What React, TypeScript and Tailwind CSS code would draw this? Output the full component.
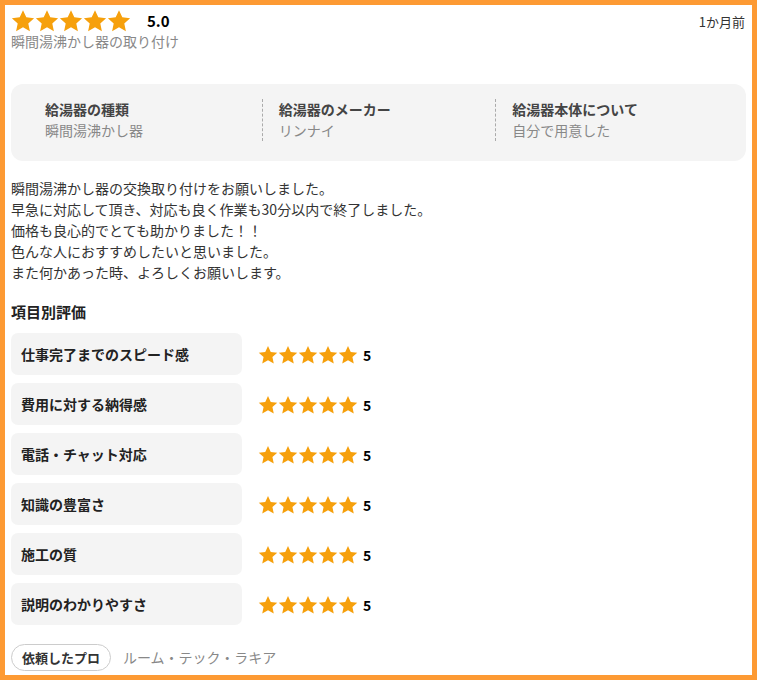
const STAR_COLOR = "#f6a00c";

const specs = [
  { label: "給湯器の種類", value: "瞬間湯沸かし器" },
  { label: "給湯器のメーカー", value: "リンナイ" },
  { label: "給湯器本体について", value: "自分で用意した" },
];

const body = [
  "瞬間湯沸かし器の交換取り付けをお願いしました。",
  "早急に対応して頂き、対応も良く作業も30分以内で終了しました。",
  "価格も良心的でとても助かりました！！",
  "色んな人におすすめしたいと思いました。",
  "また何かあった時、よろしくお願いします。",
];

const items = [
  "仕事完了までのスピード感",
  "費用に対する納得感",
  "電話・チャット対応",
  "知識の豊富さ",
  "施工の質",
  "説明のわかりやすさ",
];

function Star({ size }: { size: number }) {
  return (
    <svg width={size} height={size} viewBox="0 0 24 24">
      <path
        d="M12 1.2l3.3 7.1 7.8.9-5.8 5.3 1.6 7.7L12 18.3l-6.9 3.9 1.6-7.7L.9 9.2l7.8-.9z"
        fill={STAR_COLOR}
      />
    </svg>
  );
}

export default function App() {
  return (
    <div
      className="h-[680px] w-[757px] border-[5px] border-[#fd9a33] bg-white text-[#333]"
      style={{ fontFamily: '"Noto Sans CJK JP", "Noto Sans", sans-serif' }}
    >
      <div className="px-[6px] pt-[4px]">
        <div className="flex items-start justify-between">
          <div className="flex items-center">
            <div className="flex">
              {[0, 1, 2, 3, 4].map((i) => (
                <Star key={i} size={24} />
              ))}
            </div>
            <span className="ml-[16px] text-[15px] font-bold text-black">5.0</span>
          </div>
          <span className="mr-[1px] mt-[3px] text-[13px] text-[#333]">1か月前</span>
        </div>
        <p className="-mt-[2px] text-[14px] leading-[20px] text-[#888]">
          瞬間湯沸かし器の取り付け
        </p>

        <div className="mt-[33px] grid grid-cols-3 rounded-[12px] bg-[#f4f4f4] pb-[20px] pl-[34px] pt-[15px]">
          {specs.map((s, i) => (
            <div
              key={s.label}
              className={
                i === 0
                  ? "pr-4"
                  : "-ml-[17px] border-l border-dashed border-[#aaa] pl-[16px]"
              }
            >
              <div className="text-[14px] font-bold leading-[21px] text-[#444]">
                {s.label}
              </div>
              <div className="text-[14px] leading-[21px] text-[#888]">{s.value}</div>
            </div>
          ))}
        </div>

        <div className="mt-[17px] text-[14px] leading-[21px] text-[#333]">
          {body.map((l) => (
            <p key={l}>{l}</p>
          ))}
        </div>

        <h3 className="mt-[18px] text-[15px] font-bold leading-[22px] text-[#222]">
          項目別評価
        </h3>

        <div className="mt-[10px] flex flex-col gap-[8px]">
          {items.map((it) => (
            <div key={it} className="flex items-center">
              <div className="flex h-[42px] w-[231px] items-center rounded-[7px] bg-[#f4f4f4] pl-[10px] text-[14px] font-bold text-[#222]">
                {it}
              </div>
              <div className="ml-[16px] mt-[2px] flex items-center">
                <div className="flex">
                  {[0, 1, 2, 3, 4].map((i) => (
                    <Star key={i} size={20} />
                  ))}
                </div>
                <span className="ml-[5px] text-[14px] font-bold text-black">5</span>
              </div>
            </div>
          ))}
        </div>

        <div className="mt-[19px] flex items-center">
          <span className="flex h-[27px] items-center rounded-full border border-[#ccc] px-[10px] text-[13px] font-bold text-[#333]">
            依頼したプロ
          </span>
          <span className="ml-[12px] text-[14px] text-[#888]">ルーム・テック・ラキア</span>
        </div>
      </div>
    </div>
  );
}
